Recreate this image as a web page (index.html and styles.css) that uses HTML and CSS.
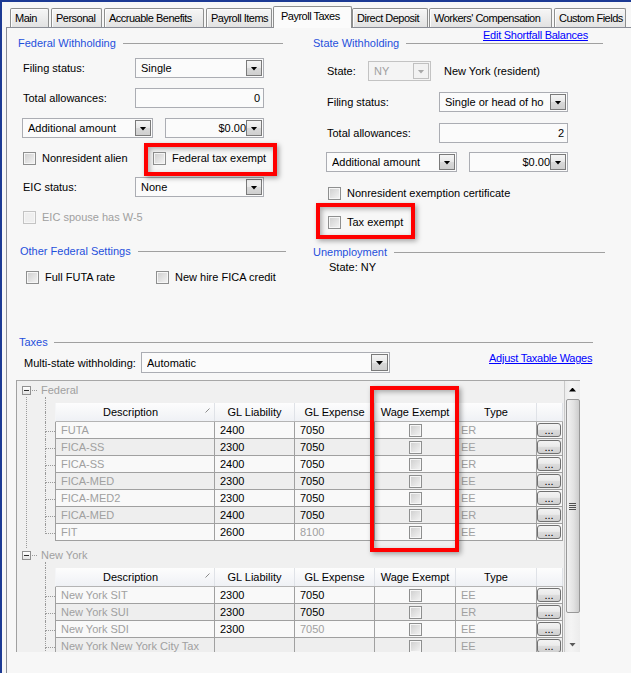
FILE: index.html
```html
<!DOCTYPE html>
<html lang="en">
<head>
<meta charset="utf-8">
<title>Employee - Payroll Taxes</title>
<link rel="stylesheet" href="styles.css">
</head>
<body>
<div class="window">
  <div class="tabs">
    <div class="tab">Main</div>
    <div class="tab">Personal</div>
    <div class="tab">Accruable Benefits</div>
    <div class="tab">Payroll Items</div>
    <div class="tab active">Payroll Taxes</div>
    <div class="tab">Direct Deposit</div>
    <div class="tab">Workers' Compensation</div>
    <div class="tab">Custom Fields</div>
  </div>

  <div class="panel">
    <div class="top">
      <div class="col fed">
        <div class="gtitle fed-title">Federal Withholding</div>
        <div class="frow fed-filing">
          <span class="lbl">Filing status:</span>
          <div class="combo c-wide"><span class="val">Single</span><span class="dd"><i class="arrow"></i></span></div>
        </div>
        <div class="frow fed-allow">
          <span class="lbl">Total allowances:</span>
          <div class="num c-wide">0</div>
        </div>
        <div class="frow fed-add">
          <div class="combo c-amt"><span class="val">Additional amount</span><span class="dd"><i class="arrow"></i></span></div>
          <div class="combo c-money"><span class="val right">$0.00</span><span class="dd"><i class="arrow"></i></span></div>
        </div>
        <div class="frow fed-checks">
          <label class="chk c-first"><span class="box"></span>Nonresident alien</label>
          <label class="chk"><span class="box"></span>Federal tax exempt<span class="highlight hl-fed"></span></label>
        </div>
        <div class="frow fed-eic">
          <span class="lbl">EIC status:</span>
          <div class="combo c-wide"><span class="val">None</span><span class="dd"><i class="arrow"></i></span></div>
        </div>
        <div class="frow fed-spouse">
          <label class="chk disabled"><span class="box"></span>EIC spouse has W-5</label>
        </div>
        <div class="gtitle other-title">Other Federal Settings</div>
        <div class="frow other-checks">
          <label class="chk c-first"><span class="box"></span>Full FUTA rate</label>
          <label class="chk"><span class="box"></span>New hire FICA credit</label>
        </div>
      </div>

      <div class="col state">
        <div class="shortfall"><a href="#">Edit Shortfall Balances</a></div>
        <div class="gtitle state-title">State Withholding</div>
        <div class="frow st-state">
          <span class="lbl lbl-state">State:</span>
          <div class="combo c-state disabled"><span class="val">NY</span><span class="dd"><i class="arrow"></i></span></div>
          <span class="state-name">New York (resident)</span>
        </div>
        <div class="frow st-filing">
          <span class="lbl">Filing status:</span>
          <div class="combo c-wide"><span class="val clip">Single or head of household</span><span class="dd"><i class="arrow"></i></span></div>
        </div>
        <div class="frow st-allow">
          <span class="lbl">Total allowances:</span>
          <div class="num c-wide">2</div>
        </div>
        <div class="frow st-add">
          <div class="combo c-amt"><span class="val">Additional amount</span><span class="dd"><i class="arrow"></i></span></div>
          <div class="combo c-money"><span class="val right">$0.00</span><span class="dd"><i class="arrow"></i></span></div>
        </div>
        <div class="frow st-nonres">
          <label class="chk"><span class="box"></span>Nonresident exemption certificate</label>
        </div>
        <div class="frow st-exempt">
          <label class="chk"><span class="box"></span>Tax exempt<span class="highlight hl-state"></span></label>
        </div>
        <div class="gtitle unemp-title">Unemployment</div>
        <div class="unemp-state">State: NY</div>
      </div>
    </div>

    <div class="taxes">
      <div class="gtitle taxes-title">Taxes</div>
      <div class="frow multi">
        <span class="lbl lbl-multi">Multi-state withholding:</span>
        <div class="combo c-multi"><span class="val">Automatic</span><span class="dd"><i class="arrow"></i></span></div>
        <a href="#" class="adjust">Adjust Taxable Wages</a>
      </div>

      <div class="grid">
        <div class="tree">
          <div class="node">
            <div class="node-head"><span class="expander"></span><span class="node-dots"></span><span class="node-name">Federal</span></div>
            <div class="node-body">
              <div class="spacer"></div>
              <div class="trow head"><span class="stub"></span>
                <div class="cells">
                  <div class="cell desc-h"><span class="ht">Description</span><svg class="sort" width="5" height="5" viewBox="0 0 5 5"><path d="M0.5 4.5L4.5 0.5" stroke="#8a8a8a" stroke-width="1"/></svg></div>
                  <div class="cell">GL Liability</div>
                  <div class="cell">GL Expense</div>
                  <div class="cell">Wage Exempt</div>
                  <div class="cell">Type</div>
                  <div class="cell"></div>
                </div>
              </div>
              <div class="trow"><span class="stub"></span>
                <div class="cells"><div class="cell dim">FUTA</div><div class="cell">2400</div><div class="cell">7050</div><div class="cell wx"><span class="box"></span></div><div class="cell dim">ER</div><div class="cell bt"><span class="ell">...</span></div></div>
              </div>
              <div class="trow alt"><span class="stub"></span>
                <div class="cells"><div class="cell dim">FICA-SS</div><div class="cell">2300</div><div class="cell">7050</div><div class="cell wx"><span class="box"></span></div><div class="cell dim">EE</div><div class="cell bt"><span class="ell">...</span></div></div>
              </div>
              <div class="trow"><span class="stub"></span>
                <div class="cells"><div class="cell dim">FICA-SS</div><div class="cell">2400</div><div class="cell">7050</div><div class="cell wx"><span class="box"></span></div><div class="cell dim">ER</div><div class="cell bt"><span class="ell">...</span></div></div>
              </div>
              <div class="trow alt"><span class="stub"></span>
                <div class="cells"><div class="cell dim">FICA-MED</div><div class="cell">2300</div><div class="cell">7050</div><div class="cell wx"><span class="box"></span></div><div class="cell dim">EE</div><div class="cell bt"><span class="ell">...</span></div></div>
              </div>
              <div class="trow"><span class="stub"></span>
                <div class="cells"><div class="cell dim">FICA-MED2</div><div class="cell">2300</div><div class="cell">7050</div><div class="cell wx"><span class="box"></span></div><div class="cell dim">EE</div><div class="cell bt"><span class="ell">...</span></div></div>
              </div>
              <div class="trow alt"><span class="stub"></span>
                <div class="cells"><div class="cell dim">FICA-MED</div><div class="cell">2400</div><div class="cell">7050</div><div class="cell wx"><span class="box"></span></div><div class="cell dim">ER</div><div class="cell bt"><span class="ell">...</span></div></div>
              </div>
              <div class="trow end"><span class="stub"></span>
                <div class="cells"><div class="cell dim">FIT</div><div class="cell">2600</div><div class="cell dim">8100</div><div class="cell wx"><span class="box"></span></div><div class="cell dim">EE</div><div class="cell bt"><span class="ell">...</span></div></div>
              </div>
            </div>
          </div>

          <div class="node last">
            <div class="node-head"><span class="expander"></span><span class="node-dots"></span><span class="node-name">New York</span></div>
            <div class="node-body">
              <div class="spacer"></div>
              <div class="trow head"><span class="stub"></span>
                <div class="cells">
                  <div class="cell desc-h"><span class="ht">Description</span><svg class="sort" width="5" height="5" viewBox="0 0 5 5"><path d="M0.5 4.5L4.5 0.5" stroke="#8a8a8a" stroke-width="1"/></svg></div>
                  <div class="cell">GL Liability</div>
                  <div class="cell">GL Expense</div>
                  <div class="cell">Wage Exempt</div>
                  <div class="cell">Type</div>
                  <div class="cell"></div>
                </div>
              </div>
              <div class="trow"><span class="stub"></span>
                <div class="cells"><div class="cell dim">New York SIT</div><div class="cell">2300</div><div class="cell">7050</div><div class="cell wx"><span class="box"></span></div><div class="cell dim">EE</div><div class="cell bt"><span class="ell">...</span></div></div>
              </div>
              <div class="trow alt"><span class="stub"></span>
                <div class="cells"><div class="cell dim">New York SUI</div><div class="cell">2300</div><div class="cell">7050</div><div class="cell wx"><span class="box"></span></div><div class="cell dim">ER</div><div class="cell bt"><span class="ell">...</span></div></div>
              </div>
              <div class="trow"><span class="stub"></span>
                <div class="cells"><div class="cell dim">New York SDI</div><div class="cell">2300</div><div class="cell dim">7050</div><div class="cell wx"><span class="box"></span></div><div class="cell dim">EE</div><div class="cell bt"><span class="ell">...</span></div></div>
              </div>
              <div class="trow alt"><span class="stub"></span>
                <div class="cells"><div class="cell dim">New York New York City Tax</div><div class="cell"></div><div class="cell"></div><div class="cell wx"><span class="box"></span></div><div class="cell dim">EE</div><div class="cell bt"><span class="ell">...</span></div></div>
              </div>
            </div>
          </div>
        </div>

        <div class="vscroll">
          <div class="sb-btn sb-up"></div>
          <div class="sb-thumb"><span class="grip"></span></div>
          <div class="sb-track"></div>
          <div class="sb-btn sb-down"></div>
        </div>

        <span class="highlight hl-wage"></span>
      </div>
    </div>
  </div>
</div>
</body>
</html>
```

FILE: styles.css
```css
* { box-sizing: border-box; }
html, body { margin: 0; padding: 0; }
body {
  width: 631px;
  height: 673px;
  overflow: hidden;
  background: #f7f7f7;
  font-family: "Liberation Sans", Arial, sans-serif;
  font-size: 11px;
  color: #000;
}
a { color: #0000ff; text-decoration: underline; letter-spacing: -0.25px; }

.window {
  height: 673px;
  border-top: 2px solid #1c3a94;
  border-left: 2px solid #1c3a94;
  overflow: hidden;
}

/* ---------- tabs ---------- */
.tabs {
  display: flex;
  align-items: flex-end;
  height: 25px;
  padding-left: 6px;
}
.tab {
  flex: none;
  height: 19px;
  margin-left: 2px;
  padding-left: 4px;
  line-height: 18px;
  letter-spacing: -0.5px;
  white-space: nowrap;
  overflow: hidden;
  border: 1px solid #8e8f8f;
  border-bottom: 0;
  border-radius: 2px 2px 0 0;
  background: linear-gradient(#f6f6f6, #e2e2e2);
  box-shadow: inset 1px 1px 0 #fdfdfd;
}
.tab:nth-child(1) { width: 39px; }
.tab:nth-child(2) { width: 51px; }
.tab:nth-child(3) { width: 100px; }
.tab:nth-child(4) { width: 66px; }
.tab:nth-child(5) { width: 79px; margin-left: 1px; }
.tab:nth-child(6) { width: 76px; margin-left: 0; }
.tab:nth-child(7) { width: 123px; margin-left: 1px; }
.tab:nth-child(8) { width: 72px; }
.tab.active {
  height: 22px;
  margin-bottom: -1px;
  padding-left: 7px;
  line-height: 19px;
  background: #fbfbfb;
  box-shadow: none;
  position: relative;
  z-index: 1;
}

/* ---------- panel ---------- */
.panel {
  width: 660px;
  height: 646px;
  margin-left: 4px;
  border-top: 1px solid #898c95;
  border-left: 1px solid #898c95;
}
.top {
  display: grid;
  grid-template-columns: 293px 320px;
  align-items: start;
}

/* group titles */
.gtitle {
  display: flex;
  align-items: center;
  height: 14px;
  line-height: 14px;
  color: #1f50dc;
  white-space: nowrap;
}
.gtitle::after {
  content: "";
  flex: 1;
  height: 1px;
  background: #a0a0a0;
  margin-left: 7px;
}
.fed-title { margin-top: 8px; padding-left: 11px; }
.fed-title::after { margin-right: 17px; }
.other-title { margin-top: 17px; padding-left: 13px; }
.other-title::after { margin-right: 14px; }
.state-title { margin-top: -6px; padding-left: 13px; }
.state-title::after { margin-right: 17px; }
.unemp-title { margin-top: 13px; padding-left: 13px; }
.unemp-title::after { margin-right: 15px; }
.taxes-title { margin-top: 48px; padding-left: 12px; width: 586px; }
.taxes-title::after { margin-left: 6px; }

/* form rows */
.frow {
  display: flex;
  align-items: center;
  height: 20px;
  padding-left: 16px;
  white-space: nowrap;
}
.lbl { flex: none; width: 112px; }
.lbl-state { width: 41px; }
.lbl-multi { width: 117px; }

.fed-filing { margin-top: 8px; }
.fed-allow { margin-top: 10px; }
.fed-add { margin-top: 10px; padding-left: 15px; gap: 12px; }
.fed-checks { margin-top: 10px; }
.fed-eic { margin-top: 9px; }
.fed-spouse { margin-top: 10px; }
.other-checks { margin-top: 9px; padding-left: 19px; }

.shortfall { margin-top: 1px; padding-left: 183px; height: 13px; line-height: 13px; }
.st-state { margin-top: 11px; padding-left: 27px; }
.state-name { margin-left: 13px; }
.st-filing { margin-top: 11px; padding-left: 27px; }
.st-allow { margin-top: 11px; padding-left: 27px; }
.st-add { margin-top: 9px; padding-left: 26px; gap: 12px; }
.st-nonres { margin-top: 11px; padding-left: 28px; }
.st-exempt { margin-top: 9px; padding-left: 28px; }
.unemp-state { margin-top: 2px; padding-left: 29px; height: 13px; line-height: 13px; }

/* combo boxes and inputs */
.combo {
  flex: none;
  display: flex;
  align-items: center;
  height: 20px;
  padding-left: 5px;
  border: 1px solid #abadb3;
  background: #fbfbfb;
}
.combo .val {
  flex: 1;
  overflow: hidden;
  white-space: nowrap;
}
.combo .val.right { text-align: right; }
.combo .val.clip { margin-right: 6px; }
.dd {
  flex: none;
  width: 16px;
  height: 16px;
  margin-right: 1px;
  border: 1px solid #7a7a7a;
  background: linear-gradient(#f5f5f5, #e8e8e8 50%, #d9d9d9 51%, #cfcfcf);
  display: flex;
  align-items: center;
  justify-content: center;
}
.arrow {
  display: block;
  width: 7px;
  height: 4px;
  margin-top: 1px;
  background: #000;
  clip-path: polygon(0 0, 100% 0, 50% 100%);
}
.combo.disabled { color: #a0a0a0; background: #f4f4f4; border-color: #c3c3c3; }
.combo.disabled .dd { border-color: #c0c0c0; background: #f2f2f2; }
.combo.disabled .arrow { background: #a8a8a8; }

.c-wide { width: 129px; }
.c-amt { width: 131px; }
.c-money { width: 99px; }
.c-state { width: 63px; }
.c-multi { width: 249px; height: 21px; }
.c-multi .dd { width: 17px; height: 17px; }

.num {
  flex: none;
  height: 20px;
  line-height: 18px;
  padding-right: 3px;
  text-align: right;
  border: 1px solid #abadb3;
  background: #fbfbfb;
}

/* checkboxes */
.chk {
  position: relative;
  display: flex;
  align-items: center;
  gap: 6px;
  height: 20px;
}
.c-first { width: 130px; }
.box {
  flex: none;
  display: block;
  width: 13px;
  height: 13px;
  border: 1px solid #8e8f8f;
  background: linear-gradient(135deg, #cdcdcd, #f5f5f5);
  box-shadow: inset 0 0 0 1px #f6f6f6;
}
.chk.disabled { color: #a0a0a0; }
.chk.disabled .box {
  border-color: #c4c4c4;
  background: #efefef;
  box-shadow: inset 0 0 0 1px #f7f7f7;
}

/* annotation highlights */
.highlight {
  position: absolute;
  display: block;
  border: 4px solid #ff0000;
  box-shadow: 2px 2px 5px rgba(0, 0, 0, 0.35), inset 2px 2px 5px rgba(0, 0, 0, 0.3);
  pointer-events: none;
  z-index: 5;
}
.hl-fed { left: -9px; top: -5px; width: 133px; height: 33px; }
.hl-state { left: -12px; top: -9px; width: 99px; height: 36px; }
.hl-wage { left: 353px; top: 5px; width: 89px; height: 166px; }

/* taxes */
.multi { margin-top: 3px; height: 21px; padding-left: 17px; }
.adjust { align-self: flex-start; margin-left: 99px; line-height: 13px; }

.grid {
  position: relative;
  display: flex;
  margin: 7px 0 0 9px;
  width: 564px;
  height: 272px;
  border-top: 1px solid #a7a7a7;
  border-left: 1px solid #a0a0a0;
  overflow: hidden;
}
.tree {
  flex: 1;
  background: #f0f0f0;
  overflow: hidden;
}
.node-head {
  display: flex;
  align-items: center;
  height: 14px;
  padding-left: 5px;
  color: #a0a0a0;
  white-space: nowrap;
}
.node:first-child .node-head { margin-top: 2px; }
.expander {
  flex: none;
  width: 9px;
  height: 9px;
  border: 1px solid #919191;
  background: linear-gradient(#ffffff, #e2e2e2);
  display: flex;
  align-items: center;
  justify-content: center;
}
.expander::after {
  content: "";
  width: 5px;
  height: 1px;
  background: #2e2e2e;
}
.node-dots { width: 5px; margin-left: 1px; border-top: 1px dotted #9a9a9a; }
.node-name { margin-left: 4px; }
.node-body {
  margin-left: 9px;
  padding-left: 18px;
  padding-bottom: 7px;
  border-left: 1px dotted #9a9a9a;
}
.node.last .node-body { border-left-color: transparent; }
.spacer { height: 6px; border-left: 1px dotted #9a9a9a; }

.trow { display: flex; height: 17px; }
.trow.head { height: 19px; }
.stub {
  flex: none;
  width: 10px;
  display: flex;
  flex-direction: column;
}
.stub::before {
  content: "";
  height: 9px;
  border-left: 1px dotted #9a9a9a;
  border-bottom: 1px dotted #9a9a9a;
}
.stub::after {
  content: "";
  flex: 1;
  border-left: 1px dotted #9a9a9a;
}
.trow.head .stub::before { border-bottom: 0; }
.trow.end .stub::after { border-left-color: transparent; }

.cells {
  display: grid;
  grid-template-columns: 159px 80px 80px 81px 81px 26px;
  width: 508px;
  border-left: 1px solid #a0a0a0;
  border-bottom: 1px solid #a0a0a0;
  background: #f9f9f9;
}
.trow.alt .cells { background: #eeeeee; }
.cell {
  border-right: 1px solid #a0a0a0;
  padding-left: 5px;
  line-height: 16px;
  white-space: nowrap;
  overflow: hidden;
}
.dim { color: #a0a0a0; }
.head .cells {
  background: linear-gradient(#fdfdfd, #eff1f5);
  border-left-color: #f4f5f7;
  border-bottom-color: #b4b4b4;
}
.head .cell {
  padding: 0;
  line-height: 18px;
  text-align: center;
  border-right-color: #dfe2e7;
}
.head .desc-h {
  display: flex;
  align-items: center;
  padding-right: 4px;
}
.desc-h .ht { flex: 1; text-align: center; }
.sort { flex: none; display: block; margin-bottom: 3px; }
.cell.wx {
  display: flex;
  align-items: center;
  justify-content: center;
  padding: 0;
}
.cell.bt { padding: 1px 0 0 0; }
.ell {
  display: block;
  width: 24px;
  height: 14px;
  border: 1px solid #707070;
  border-radius: 3px;
  background: linear-gradient(#f3f3f3, #ebebeb 45%, #dddddd 50%, #d0d0d0);
  text-align: center;
  font-size: 11px;
  line-height: 10px;
  padding-top: 1px;
}

/* scrollbar */
.vscroll {
  flex: none;
  width: 16px;
  display: flex;
  flex-direction: column;
  align-items: center;
  border-left: 1px solid #c9c9c9;
  background: linear-gradient(to right, #ececec, #f4f4f4 40%, #ececec);
}
.sb-btn {
  flex: none;
  width: 15px;
  height: 17px;
  display: flex;
  align-items: center;
  justify-content: center;
}
.sb-up::after {
  content: "";
  width: 7px;
  height: 4px;
  background: #000;
  clip-path: polygon(50% 0, 100% 100%, 0 100%);
}
.sb-down::after {
  content: "";
  width: 7px;
  height: 4px;
  margin-top: 2px;
  background: #5a5a5a;
  clip-path: polygon(0 0, 100% 0, 50% 100%);
}
.sb-thumb {
  flex: none;
  width: 14px;
  height: 214px;
  margin-top: 1px;
  border: 1px solid #989898;
  border-radius: 2px;
  background: linear-gradient(to right, #f2f2f2, #e2e2e2 55%, #cdcdcd);
  display: flex;
  align-items: center;
  justify-content: center;
}
.grip {
  display: block;
  width: 7px;
  height: 7px;
  background: repeating-linear-gradient(#505050 0 1px, transparent 1px 2px);
}
.sb-track { flex: 1; }
```
